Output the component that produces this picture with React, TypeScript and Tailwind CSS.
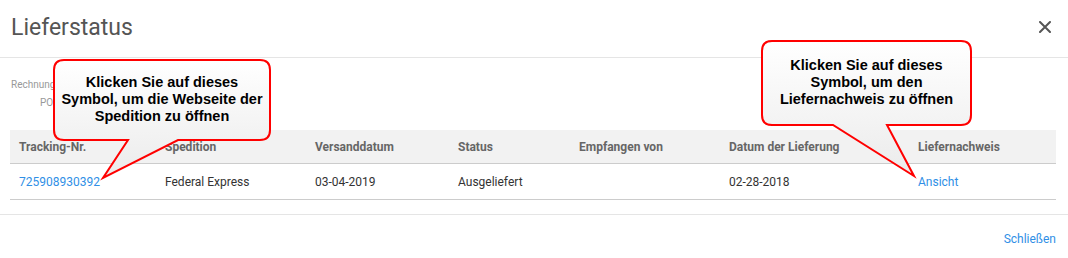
import React from "react";

const cols = [
  { label: "Tracking-Nr.", w: "w-[146px]" },
  { label: "Spedition", w: "w-[150px]" },
  { label: "Versanddatum", w: "w-[143px]" },
  { label: "Status", w: "w-[121px]" },
  { label: "Empfangen von", w: "w-[150px]" },
  { label: "Datum der Lieferung", w: "w-[189px]" },
  { label: "Liefernachweis", w: "w-[147px]" },
];

const row = [
  { v: "725908930392", link: true },
  { v: "Federal Express" },
  { v: "03-04-2019" },
  { v: "Ausgeliefert" },
  { v: "" },
  { v: "02-28-2018" },
  { v: "Ansicht", link: true },
];

export default function App() {
  return (
    <div className="relative w-[1068px] h-[258px] bg-white overflow-hidden font-['Roboto','Liberation_Sans',sans-serif]">
      {/* Header */}
      <div className="flex items-center justify-between h-[58px] pl-[11px] pr-[17px] border-b border-[#e5e5e5]">
        <h1 className="text-[23px] leading-none text-[#555] pb-[3px]">Lieferstatus</h1>
        <svg width="12" height="12" viewBox="0 0 12 12" className="mb-[4px]">
          <path d="M1 1 L11 11 M11 1 L1 11" stroke="#555" strokeWidth="2" strokeLinecap="round" />
        </svg>
      </div>

      {/* Body */}
      <div className="px-[10px] pt-[18px]">
        <div className="w-[43px] ml-[1px] overflow-hidden text-[10px] leading-[18px] text-[#999]">
          <div className="whitespace-nowrap">Rechnungsnummer:</div>
          <div className="whitespace-nowrap pl-[29px]">PO-Nummer:</div>
        </div>

        <div className="mt-[18px] w-[1046px]">
          <div className="flex h-[34px] items-center bg-[#f2f2f2] border-b border-[#cccccc]">
            {cols.map((c) => (
              <div key={c.label} className={`${c.w} pl-[9px] text-[12px] font-bold text-[#666]`}>
                {c.label}
              </div>
            ))}
          </div>
          <div className="flex h-[36px] items-center border-b border-[#cccccc]">
            {row.map((c, i) => (
              <div
                key={i}
                className={`${cols[i].w} pl-[9px] text-[12px] ${c.link ? "text-[#2f8fe6]" : "text-[#333]"}`}
              >
                {c.v}
              </div>
            ))}
          </div>
        </div>
      </div>

      {/* Footer */}
      <div className="mt-[14px] border-t border-[#e5e5e5] flex justify-end pr-[12px] pt-[15px]">
        <span className="text-[12px] text-[#2f8fe6]">Schließen</span>
      </div>

      {/* Callouts */}
      <svg className="absolute left-0 top-0 pointer-events-none" width="1068" height="258" viewBox="0 0 1068 258">
        <defs>
          <linearGradient id="cg1" x1="0" y1="0" x2="0" y2="1">
            <stop offset="0" stopColor="#ffffff" />
            <stop offset="1" stopColor="#ebebeb" />
          </linearGradient>
        </defs>
        <path
          d="M 64 60 H 260 Q 270 60 270 70 V 130 Q 270 140 260 140 H 178 L 103 178 L 128 140 H 64 Q 54 140 54 130 V 70 Q 54 60 64 60 Z"
          fill="url(#cg1)"
          stroke="#ff0000"
          strokeWidth="2"
        />
        <path
          d="M 772 41 H 961 Q 971 41 971 51 V 115 Q 971 125 961 125 H 887 L 914 176 L 833 125 H 772 Q 762 125 762 115 V 51 Q 762 41 772 41 Z"
          fill="url(#cg1)"
          stroke="#ff0000"
          strokeWidth="2"
        />
      </svg>
      <div className="absolute left-[54px] top-[74px] w-[216px] text-center font-['Liberation_Sans',Arial,sans-serif] font-bold text-[14.5px] leading-[17px] text-black">
        Klicken Sie auf dieses
        <br />
        Symbol, um die Webseite der
        <br />
        Spedition zu öffnen
      </div>
      <div className="absolute left-[762px] top-[57px] w-[209px] text-center font-['Liberation_Sans',Arial,sans-serif] font-bold text-[14.5px] leading-[17px] text-black">
        Klicken Sie auf dieses
        <br />
        Symbol, um den
        <br />
        Liefernachweis zu öffnen
      </div>
    </div>
  );
}
